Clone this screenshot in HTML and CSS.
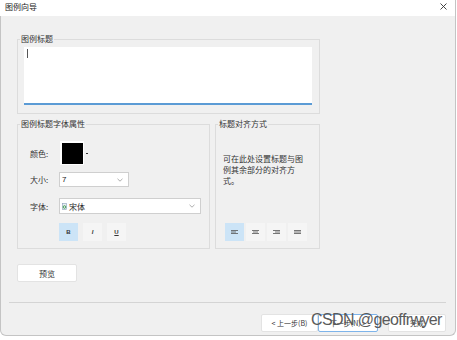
FILE: index.html
```html
<!DOCTYPE html>
<html>
<head>
  <meta charset="utf-8">
  <meta name="viewport" content="width=device-width, initial-scale=1">
  <title>图例向导</title>
  <link rel="stylesheet" href="styles.css">
</head>
<body>
<div class="dialog">
  <div class="titlebar">
    <span class="title">图例向导</span>
    <svg class="close" width="7" height="7" viewBox="0 0 7 7"><path d="M0.5 0.5L6.5 6.5M6.5 0.5L0.5 6.5" stroke="#333" stroke-width="0.9" fill="none"/></svg>
  </div>

  <div class="content">
    <fieldset class="group title-group">
      <legend>图例标题</legend>
      <div class="title-input"><span class="caret"></span></div>
    </fieldset>

    <div class="groups">
      <fieldset class="group font-group">
        <legend>图例标题字体属性</legend>
        <div class="field color-field">
          <span class="label">颜色:</span>
          <span class="swatch"><span></span></span>
          <span class="drop"></span>
        </div>
        <div class="field size-field">
          <span class="label">大小:</span>
          <div class="select size-select">
            <span>7</span>
            <svg class="chev" width="6" height="4" viewBox="0 0 6 4"><path d="M0.5 0.8L3 3.2L5.5 0.8" stroke="#999" stroke-width="0.8" fill="none"/></svg>
          </div>
        </div>
        <div class="field font-field">
          <span class="label">字体:</span>
          <div class="select font-select">
            <svg class="font-icon" width="5" height="7" viewBox="0 0 5 7"><rect x="0.5" y="0.5" width="4" height="6" fill="#e8eef4" stroke="#8aa0b8" stroke-width="0.6"/><circle cx="2.5" cy="4" r="1.3" fill="none" stroke="#3a9a4a" stroke-width="0.9"/></svg>
            <span>宋体</span>
            <svg class="chev" width="6" height="4" viewBox="0 0 6 4"><path d="M0.5 0.8L3 3.2L5.5 0.8" stroke="#999" stroke-width="0.8" fill="none"/></svg>
          </div>
        </div>
        <div class="tools">
          <button class="tool on bold">B</button>
          <button class="tool italic">I</button>
          <button class="tool under">U</button>
        </div>
      </fieldset>

      <fieldset class="group align-group">
        <legend>标题对齐方式</legend>
        <p class="hint">可在此处设置标题与图例其余部分的对齐方式。</p>
        <div class="tools aligns">
          <button class="tool on"><svg width="7" height="5" viewBox="0 0 7 5"><path d="M0 0.5H7M0 2H5M0 3.5H7" stroke="#555" stroke-width="0.8"/></svg></button>
          <button class="tool"><svg width="7" height="5" viewBox="0 0 7 5"><path d="M0 0.5H7M1 2H6M0 3.5H7" stroke="#555" stroke-width="0.8"/></svg></button>
          <button class="tool"><svg width="7" height="5" viewBox="0 0 7 5"><path d="M0 0.5H7M2 2H7M0 3.5H7" stroke="#555" stroke-width="0.8"/></svg></button>
          <button class="tool"><svg width="7" height="5" viewBox="0 0 7 5"><path d="M0 0.5H7M0 2H7M0 3.5H7" stroke="#555" stroke-width="0.8"/></svg></button>
        </div>
      </fieldset>
    </div>

    <button class="btn preview">预览</button>
  </div>

  <div class="footer">
    <div class="sep"></div>
    <div class="actions">
      <button class="btn prev">&lt; 上一步(B)</button>
      <button class="btn next">下一步(N) &gt;</button>
      <button class="btn finish">完成</button>
    </div>
    <span class="watermark">CSDN @geoffrwyer</span>
  </div>
</div>
</body>
</html>
```

FILE: styles.css
```css
html, body {
  margin: 0;
  background: #fff;
}

body {
  font-family: "Noto Sans CJK SC", "Liberation Sans", sans-serif;
  font-size: 8px;
  color: #333;
}

.dialog {
  width: 454px;
  height: 335px;
  background: #f0f0f0;
  border: 1px solid #c4c4c4;
  border-top: none;
  border-radius: 0 0 6px 6px;
  position: relative;
}

.titlebar {
  height: 16px;
  background: #fff;
  display: flex;
  align-items: center;
  justify-content: space-between;
  padding: 0 8px 0 5px;
  margin-left: -1px;
  line-height: 10px;
}

.title {
  color: #222;
  margin-top: -2px;
}

.close {
  margin-top: -3px;
}

.content {
  padding: 18px 0 0 16px;
}

.group {
  margin: 0;
  padding: 0;
  border: 1px solid #dcdcdc;
  min-width: 0;
  box-sizing: border-box;
}

.group legend {
  padding: 0 1px;
  margin-left: 2px;
  line-height: 10px;
  color: #333;
}

.title-group {
  width: 303px;
  padding: 3px 0 8px 0;
}

.title-input {
  width: 282px;
  height: 52px;
  background: #fff;
  border-bottom: 2px solid #5b9bd5;
  padding: 2px 3px;
  margin-left: 6px;
}

.caret {
  display: block;
  width: 1px;
  height: 9px;
  background: #555;
}

.groups {
  display: flex;
  gap: 5px;
  margin-top: 5px;
  width: 303px;
}

.font-group {
  width: 193px;
  padding: 12px 0 7px 0;
  display: flex;
  flex-direction: column;
}

.field {
  display: flex;
  align-items: center;
  padding-left: 12px;
}

.label {
  width: 29px;
  flex: none;
}

.color-field {
  height: 24px;
}

.swatch {
  width: 22px;
  height: 22px;
  padding: 1px;
  background: #fff;
  margin-left: 1px;
  display: flex;
  align-items: center;
  justify-content: center;
}

.swatch span {
  width: 21px;
  height: 21px;
  background: #000;
}

.drop {
  width: 2px;
  height: 1px;
  background: #333;
  margin-left: 2px;
}

.select {
  background: #fff;
  border: 1px solid #cfcfcf;
  box-sizing: border-box;
  display: flex;
  align-items: center;
  padding: 0 5px 0 2px;
  color: #222;
}

.select .chev {
  margin-left: auto;
}

.size-field {
  margin-top: 7px;
}

.size-select {
  width: 70px;
  height: 15px;
  font-family: "Liberation Sans", sans-serif;
  font-size: 8px;
}

.font-field {
  margin-top: 11px;
}

.font-select {
  width: 142px;
  height: 16px;
}

.font-icon {
  margin-right: 2px;
}

.tools {
  display: flex;
  gap: 5px;
  margin-top: 9px;
  padding-left: 41px;
}

.tool {
  width: 19px;
  height: 18px;
  border: none;
  padding: 0;
  background: #f5f5f5;
  display: flex;
  align-items: center;
  justify-content: center;
  font-family: "Liberation Sans", sans-serif;
  font-size: 6px;
  font-weight: bold;
  color: #333;
}

.tool.on {
  background: #cce4f7;
}

.tool.italic {
  font-style: italic;
}

.tool.under {
  text-decoration: underline;
}

.align-group {
  width: 105px;
  padding: 0 0 7px 0;
  display: flex;
  flex-direction: column;
}

.hint {
  width: 81px;
  margin: 24px 0 0 7px;
  line-height: 11px;
  color: #333;
}

.aligns {
  margin-top: auto;
  padding-left: 9px;
  gap: 2px;
}

.btn {
  border: 1px solid #e3e3e3;
  background: #fff;
  font-family: "Noto Sans CJK SC", sans-serif;
  font-size: 7px;
  color: #333;
  padding: 0;
  height: 18px;
  border-radius: 2px;
}

.preview {
  display: block;
  margin-top: 15px;
  width: 60px;
  font-size: 8px;
}

.footer {
  padding: 20px 9px 0 8px;
}

.sep {
  height: 1px;
  background: #d4d4d4;
}

.actions {
  display: flex;
  justify-content: flex-end;
  margin-top: 11px;
}

.prev {
  width: 57px;
}

.next {
  width: 60px;
  border-color: #7eb4ea;
}

.finish {
  width: 58px;
  margin-left: 10px;
}

.watermark {
  position: absolute;
  left: 310px;
  top: 311px;
  font-family: "Liberation Sans", sans-serif;
  font-size: 16px;
  letter-spacing: -0.6px;
  color: #5a5a5a;
  font-weight: 300;
}
```
